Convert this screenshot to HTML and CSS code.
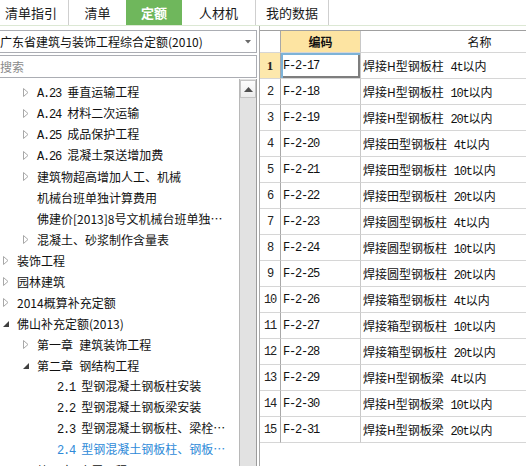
FILE: index.html
```html
<!DOCTYPE html>
<html lang="zh-CN">
<head>
<meta charset="utf-8">
<title>定额</title>
<link rel="stylesheet" href="styles.css">
</head>
<body>
<div class="app">
  <div class="tabs">
    <div class="tab t1">清单指引</div>
    <div class="tab t2">清单</div>
    <div class="tab t3 active">定额</div>
    <div class="tab t4">人材机</div>
    <div class="tab t5">我的数据</div>
  </div>
  <div class="main">
    <div class="left">
      <div class="select">
        <span class="select-text">广东省建筑与装饰工程综合定额(2010)</span>
        <svg class="select-arrow" width="6" height="4" viewBox="0 0 6 4"><polygon points="0,0 6,0 3,3.5" fill="#6a6a6a"/></svg>
      </div>
      <div class="search">搜索</div>
      <div class="tree-wrap">
        <div class="tree">
          <div class="node l1"><span class="tg"><svg class="tri-c" width="6" height="9" viewBox="0 0 6 9"><polygon points="0.5,0.5 5,4.5 0.5,8.5" fill="none" stroke="#a8a8a8"/></svg></span><span class="label"><span class="m">A.23</span> 垂直运输工程</span></div>
          <div class="node l1"><span class="tg"><svg class="tri-c" width="6" height="9" viewBox="0 0 6 9"><polygon points="0.5,0.5 5,4.5 0.5,8.5" fill="none" stroke="#a8a8a8"/></svg></span><span class="label"><span class="m">A.24</span> 材料二次运输</span></div>
          <div class="node l1"><span class="tg"><svg class="tri-c" width="6" height="9" viewBox="0 0 6 9"><polygon points="0.5,0.5 5,4.5 0.5,8.5" fill="none" stroke="#a8a8a8"/></svg></span><span class="label"><span class="m">A.25</span> 成品保护工程</span></div>
          <div class="node l1"><span class="tg"><svg class="tri-c" width="6" height="9" viewBox="0 0 6 9"><polygon points="0.5,0.5 5,4.5 0.5,8.5" fill="none" stroke="#a8a8a8"/></svg></span><span class="label"><span class="m">A.26</span> 混凝土泵送增加费</span></div>
          <div class="node l1"><span class="tg"><svg class="tri-c" width="6" height="9" viewBox="0 0 6 9"><polygon points="0.5,0.5 5,4.5 0.5,8.5" fill="none" stroke="#a8a8a8"/></svg></span><span class="label">建筑物超高增加人工、机械</span></div>
          <div class="node l1"><span class="tg"></span><span class="label">机械台班单独计算费用</span></div>
          <div class="node l1"><span class="tg"></span><span class="label">佛建价[2013]8号文机械台班单独…</span></div>
          <div class="node l1"><span class="tg"><svg class="tri-c" width="6" height="9" viewBox="0 0 6 9"><polygon points="0.5,0.5 5,4.5 0.5,8.5" fill="none" stroke="#a8a8a8"/></svg></span><span class="label">混凝土、砂浆制作含量表</span></div>
          <div class="node l0"><span class="tg"><svg class="tri-c" width="6" height="9" viewBox="0 0 6 9"><polygon points="0.5,0.5 5,4.5 0.5,8.5" fill="none" stroke="#a8a8a8"/></svg></span><span class="label">装饰工程</span></div>
          <div class="node l0"><span class="tg"><svg class="tri-c" width="6" height="9" viewBox="0 0 6 9"><polygon points="0.5,0.5 5,4.5 0.5,8.5" fill="none" stroke="#a8a8a8"/></svg></span><span class="label">园林建筑</span></div>
          <div class="node l0"><span class="tg"><svg class="tri-c" width="6" height="9" viewBox="0 0 6 9"><polygon points="0.5,0.5 5,4.5 0.5,8.5" fill="none" stroke="#a8a8a8"/></svg></span><span class="label">2014概算补充定额</span></div>
          <div class="node l0"><span class="tg"><svg class="tri-o" width="6" height="6" viewBox="0 0 6 6"><polygon points="6,0 6,6 0,6" fill="#404040"/></svg></span><span class="label">佛山补充定额(2013)</span></div>
          <div class="node l1"><span class="tg"><svg class="tri-c" width="6" height="9" viewBox="0 0 6 9"><polygon points="0.5,0.5 5,4.5 0.5,8.5" fill="none" stroke="#a8a8a8"/></svg></span><span class="label">第一章 建筑装饰工程</span></div>
          <div class="node l1"><span class="tg"><svg class="tri-o" width="6" height="6" viewBox="0 0 6 6"><polygon points="6,0 6,6 0,6" fill="#404040"/></svg></span><span class="label">第二章 钢结构工程</span></div>
          <div class="node l2"><span class="tg"></span><span class="label"><span class="m">2.1</span> 型钢混凝土钢板柱安装</span></div>
          <div class="node l2"><span class="tg"></span><span class="label"><span class="m">2.2</span> 型钢混凝土钢板梁安装</span></div>
          <div class="node l2"><span class="tg"></span><span class="label"><span class="m">2.3</span> 型钢混凝土钢板柱、梁栓…</span></div>
          <div class="node l2 selected"><span class="tg"></span><span class="label"><span class="m">2.4</span> 型钢混凝土钢板柱、钢板…</span></div>
          <div class="node l1"><span class="tg"><svg class="tri-c" width="6" height="9" viewBox="0 0 6 9"><polygon points="0.5,0.5 5,4.5 0.5,8.5" fill="none" stroke="#a8a8a8"/></svg></span><span class="label">第三章 金属工程</span></div>
        </div>
        <div class="vscroll">
          <div class="vs-up"><svg width="9" height="5" viewBox="0 0 9 5"><polygon points="0,5 9,5 4.5,0" fill="#505050"/></svg></div>
          <div class="vs-track"></div>
        </div>
      </div>
    </div>
    <div class="right">
      <div class="grid">
        <div class="cell hd num"></div>
        <div class="cell hd code hl">编码</div>
        <div class="cell hd name">名称</div>

        <div class="cell num cur">1</div>
        <div class="cell code m focus">F-2-17</div>
        <div class="cell name"><span class="label">焊接H型钢板柱 <span class="m">4t</span>以内</span></div>

        <div class="cell num m">2</div>
        <div class="cell code m">F-2-18</div>
        <div class="cell name"><span class="label">焊接H型钢板柱 <span class="m">10t</span>以内</span></div>

        <div class="cell num m">3</div>
        <div class="cell code m">F-2-19</div>
        <div class="cell name"><span class="label">焊接H型钢板柱 <span class="m">20t</span>以内</span></div>

        <div class="cell num m">4</div>
        <div class="cell code m">F-2-20</div>
        <div class="cell name"><span class="label">焊接田型钢板柱 <span class="m">4t</span>以内</span></div>

        <div class="cell num m">5</div>
        <div class="cell code m">F-2-21</div>
        <div class="cell name"><span class="label">焊接田型钢板柱 <span class="m">10t</span>以内</span></div>

        <div class="cell num m">6</div>
        <div class="cell code m">F-2-22</div>
        <div class="cell name"><span class="label">焊接田型钢板柱 <span class="m">20t</span>以内</span></div>

        <div class="cell num m">7</div>
        <div class="cell code m">F-2-23</div>
        <div class="cell name"><span class="label">焊接圆型钢板柱 <span class="m">4t</span>以内</span></div>

        <div class="cell num m">8</div>
        <div class="cell code m">F-2-24</div>
        <div class="cell name"><span class="label">焊接圆型钢板柱 <span class="m">10t</span>以内</span></div>

        <div class="cell num m">9</div>
        <div class="cell code m">F-2-25</div>
        <div class="cell name"><span class="label">焊接圆型钢板柱 <span class="m">20t</span>以内</span></div>

        <div class="cell num m">10</div>
        <div class="cell code m">F-2-26</div>
        <div class="cell name"><span class="label">焊接箱型钢板柱 <span class="m">4t</span>以内</span></div>

        <div class="cell num m">11</div>
        <div class="cell code m">F-2-27</div>
        <div class="cell name"><span class="label">焊接箱型钢板柱 <span class="m">10t</span>以内</span></div>

        <div class="cell num m">12</div>
        <div class="cell code m">F-2-28</div>
        <div class="cell name"><span class="label">焊接箱型钢板柱 <span class="m">20t</span>以内</span></div>

        <div class="cell num m">13</div>
        <div class="cell code m">F-2-29</div>
        <div class="cell name"><span class="label">焊接H型钢板梁 <span class="m">4t</span>以内</span></div>

        <div class="cell num m">14</div>
        <div class="cell code m">F-2-30</div>
        <div class="cell name"><span class="label">焊接H型钢板梁 <span class="m">10t</span>以内</span></div>

        <div class="cell num m">15</div>
        <div class="cell code m">F-2-31</div>
        <div class="cell name"><span class="label">焊接H型钢板梁 <span class="m">20t</span>以内</span></div>
      </div>
    </div>
  </div>
</div>
</body>
</html>
```

FILE: styles.css
```css
* { box-sizing: border-box; }
html, body { margin: 0; padding: 0; background: #fff; }
body {
  font-family: "Noto Sans CJK SC", "Microsoft YaHei", sans-serif;
  font-size: 12px;
  color: #111;
}
.app {
  width: 526px;
  height: 466px;
  overflow: hidden;
  display: flex;
  flex-direction: column;
}
.m {
  font-family: "Liberation Mono", "Noto Sans CJK SC", monospace;
  font-size: 12px;
  letter-spacing: -1.2px;
  word-spacing: 0;
}
.label { white-space: nowrap; }

/* tabs */
.tabs {
  display: flex;
  height: 26px;
  flex: none;
  border-bottom: 1px solid #dce8d4;
  background: #fff;
}
.tab {
  height: 25px;
  line-height: 25px;
  font-size: 13px;
  color: #1a1a1a;
  text-align: center;
  border-right: 1px solid #cfcfcf;
}
.t1 { width: 69px; text-align: left; padding-left: 5px; }
.t2 { width: 57px; border-right: none; }
.t3 { width: 56px; border-right: none; }
.t4 { width: 74px; }
.t5 { width: 73px; }
.tab.active {
  background: #6fb75c;
  color: #fff;
  font-weight: bold;
}

/* main */
.main {
  flex: 1;
  display: flex;
  min-height: 0;
  gap: 2px;
}
.left {
  width: 257px;
  flex: none;
  display: flex;
  flex-direction: column;
  padding-top: 4px;
  min-height: 0;
}
.select {
  height: 23px;
  margin-left: -6px;
  border: 1px solid #abadb3;
  display: flex;
  align-items: center;
  padding-left: 5px;
  padding-right: 5px;
  flex: none;
}
.select-text {
  flex: 1;
  white-space: nowrap;
  line-height: 21px;
}
.select-arrow { display: block; }
.search {
  height: 23px;
  margin-top: 2px;
  margin-left: -6px;
  border: 1px solid #abadb3;
  padding-left: 5px;
  line-height: 21px;
  color: #8a8a8a;
  flex: none;
}
.tree-wrap {
  flex: 1;
  display: flex;
  min-height: 0;
  margin-top: 1px;
}
.tree {
  flex: 1;
  padding-top: 3px;
  overflow: hidden;
  word-spacing: 3.5px;
}
.node {
  height: 21px;
  line-height: 21px;
  white-space: nowrap;
  overflow: hidden;
  display: flex;
  align-items: center;
}
.l0 { padding-left: 0; }
.l1 { padding-left: 20px; }
.l2 { padding-left: 40px; }
.tg {
  width: 17px;
  flex: none;
  display: flex;
  align-items: center;
  padding-left: 3px;
  height: 21px;
}
.tg svg { display: block; }
.node.selected { color: #2e8ad8; }

.vscroll {
  width: 18px;
  flex: none;
  display: flex;
  flex-direction: column;
  border-left: 1px solid #b8b8b8;
  border-right: 1px solid #9c9c9c;
  background: #e2e2e2;
}
.vs-up {
  height: 18px;
  margin-top: 1px;
  border: 1px solid #c4c4c4;
  background: linear-gradient(#fdfdfd, #ececec);
  display: flex;
  align-items: center;
  justify-content: center;
}
.vs-up svg { display: block; }
.vs-track { flex: 1; }

/* right grid */
.right {
  flex: 1;
  min-width: 0;
  overflow: hidden;
  border-left: 1px solid #a9a9a9;
  padding-top: 4px;
}
.grid {
  display: grid;
  grid-template-columns: 21px 80px 238px;
  grid-auto-rows: 26px;
  grid-template-rows: 22px;
  width: 339px;
  border-top: 1px solid #a0a0a0;
}
.cell {
  border-bottom: 1px solid #d6d6d6;
  border-right: 1px solid #d6d6d6;
  white-space: nowrap;
  overflow: hidden;
  display: flex;
  align-items: center;
  color: #111;
}
.cell.hd { height: 22px; }
.cell.num {
  justify-content: center;
  border-right-color: #a8a8a8;
  color: #222;
}
.cell.code { padding-left: 2px; border-right-color: #c8c8c8; }
.cell.name { padding-left: 2px; word-spacing: 4px; }
.cell.hd.code, .cell.hd.name { justify-content: center; padding-left: 0; }
.cell.hd.code { font-weight: bold; }
.cell.hl { background: #fde4a2; }
.cell.cur {
  background: #fde8ac;
  font-weight: bold;
  font-family: "Liberation Serif", serif;
  font-size: 13px;
}
.cell.focus {
  box-shadow: inset 2px 2px 0 #7db3d8, inset -2px -2px 0 #7e7e7e;
}
```
